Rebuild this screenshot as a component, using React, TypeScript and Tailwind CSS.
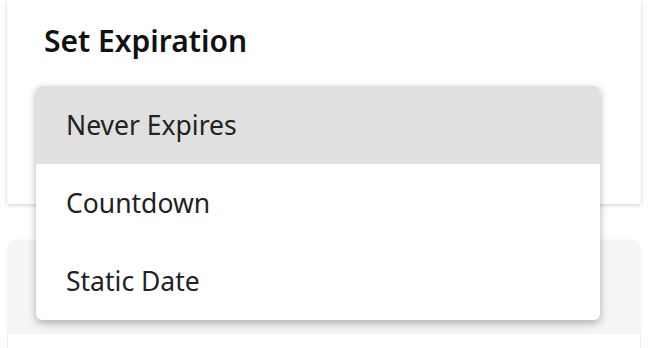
import React from "react";

export default function App() {
  const items = ["Never Expires", "Countdown", "Static Date"];
  return (
    <div
      className="relative w-[648px] h-[348px] overflow-hidden bg-white"
      style={{ fontFamily: '"Noto Sans", "Open Sans", sans-serif' }}
    >
      <div className="flex flex-col gap-[36px] px-[7px]">
        <div className="h-[204px] bg-white shadow-[0_1px_4px_rgba(0,0,0,0.2)] px-[37px] pt-[22px]">
          <h2 className="text-[30px] font-semibold text-[#111] leading-[38px]">Set Expiration</h2>
        </div>
        <div className="h-[94px] rounded-t-[10px] bg-[#f5f5f7] shadow-[0_0_3px_rgba(0,0,0,0.06)]"></div>
        <div className="h-[20px] bg-white border-l border-r border-[#ececef] -mt-[36px]"></div>
      </div>
      <div className="absolute left-[36px] top-[86px] w-[564px] rounded-[6px] bg-white shadow-[0_3px_8px_rgba(0,0,0,0.3)] overflow-hidden">
        {items.map((t, i) => (
          <div
            key={t}
            className={`h-[78px] flex items-center px-[30px] pt-[2px] text-[26.5px] text-[#222] ${i === 0 ? "bg-[#e0e0e0]" : ""}`}
          >
            {t}
          </div>
        ))}
      </div>
    </div>
  );
}
